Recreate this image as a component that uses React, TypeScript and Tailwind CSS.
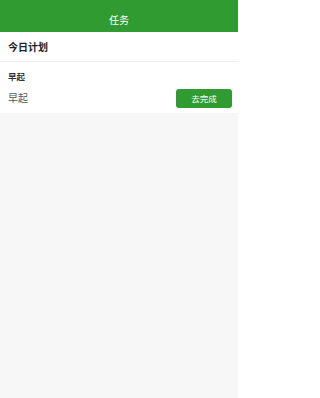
export default function App() {
  return (
    <div
      className="min-h-[398px] w-[238px] bg-[#f7f7f7]"
      style={{ fontFamily: '"Noto Sans CJK SC", "Noto Sans", sans-serif' }}
    >
      <header className="flex h-[32px] items-center justify-center bg-[#2f9b30] pt-[7px]">
        <span className="text-[10px] leading-none text-white">任务</span>
      </header>

      <div className="bg-white">
        <div className="flex h-[30px] items-center border-b border-[#f0f0f0] px-2">
          <h2 className="text-[10px] font-bold leading-none text-[#222]">今日计划</h2>
        </div>

        <div className="pb-[5px] pl-2 pr-[6px] pt-[10px]">
          <p className="text-[8.5px] font-bold leading-none text-[#333]">早起</p>
          <div className="mt-[8px] flex items-center justify-between">
            <span className="text-[10px] leading-none text-[#555]">早起</span>
            <button className="flex h-[19px] w-[56px] items-center justify-center rounded-[3px] bg-[#2f9b30] text-[8.5px] leading-none text-white">
              去完成
            </button>
          </div>
        </div>
      </div>
    </div>
  );
}
